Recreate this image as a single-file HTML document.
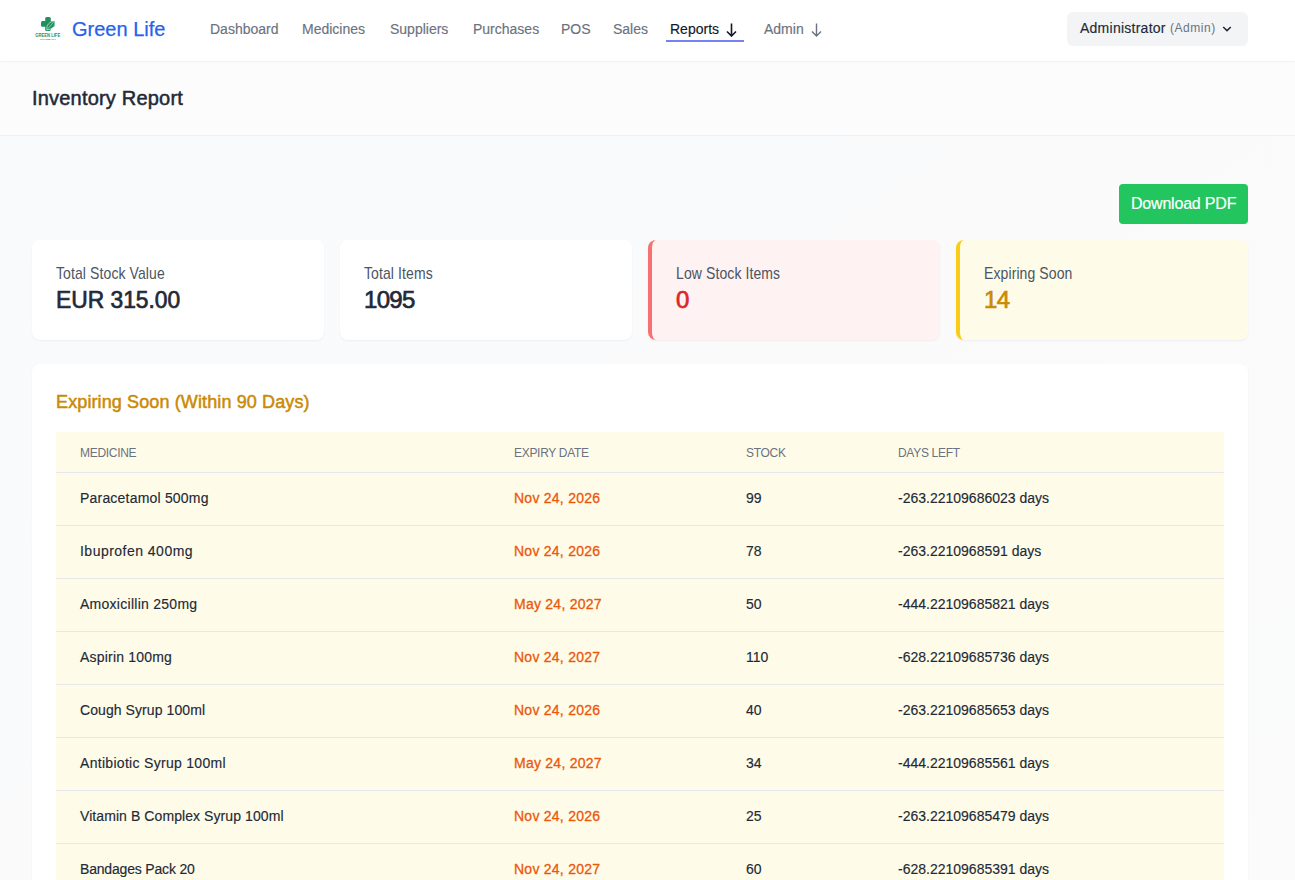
<!DOCTYPE html>
<html><head><meta charset="utf-8">
<style>
*{box-sizing:border-box;margin:0;padding:0}
html,body{width:1295px;height:880px;overflow:hidden}
body{font-family:"Liberation Sans",sans-serif;background:linear-gradient(to bottom right,#f9fafb,#fbfbfb);color:#111827;position:relative}
.t{position:absolute;white-space:nowrap}
.nav{position:absolute;left:0;top:0;width:1295px;height:62px;background:#fff;border-bottom:1px solid #f2f3f5;box-shadow:0 1px 2px rgba(0,0,0,0.02);z-index:2}
.logo{position:absolute;left:28px;top:10px;width:42px;height:36px}
.brand{left:72px;top:17px;font-size:20px;line-height:24px;color:#2563eb;-webkit-text-stroke:0.25px #2563eb}
.link{top:20px;font-size:14px;line-height:18px;color:#6b7280;-webkit-text-stroke:0.15px #6b7280}
.link.active{color:#111827;-webkit-text-stroke-color:#111827}
.arr{position:absolute;top:23px;width:11px;height:14px}
.uline{position:absolute;left:666px;top:40px;width:78px;height:2px;background:#7583f2}
.admin{position:absolute;left:1067px;top:12px;width:181px;height:34px;background:#f3f4f6;border-radius:6px}
.hdr{position:absolute;left:0;top:62px;width:1295px;height:74px;background:#fcfcfc;border-bottom:1px solid #f0f1f3}
.h1{left:32px;top:24px;font-size:20px;line-height:24px;color:#1f2937;-webkit-text-stroke:0.5px #1f2937;letter-spacing:0.2px}
.btn{position:absolute;left:1119px;top:184px;width:129px;height:40px;background:#22c55e;border-radius:4px}
.btn .t{left:12px;top:11px;font-size:16px;line-height:18px;color:#fff;letter-spacing:-0.2px;-webkit-text-stroke:0.2px #fff}
.card{position:absolute;top:240px;width:292px;height:100px;background:#fff;border-radius:8px;box-shadow:0 1px 2px rgba(0,0,0,0.05)}
.card .lbl{left:24px;top:25px;font-size:14px;line-height:18px;color:#4b5563;letter-spacing:0.1px;transform:scaleY(1.15);transform-origin:0 14px}
.card .val{left:24px;top:46px;font-size:24px;line-height:28px;color:#1f2937;-webkit-text-stroke:0.7px #1f2937;letter-spacing:-0.7px}
.card.red{background:#fef2f2;border-left:4px solid #f87171}
.card.yel{background:#fefce8;border-left:4px solid #facc15}
.panel{position:absolute;left:32px;top:364px;width:1216px;height:600px;background:#fff;border-radius:8px;box-shadow:0 1px 2px rgba(0,0,0,0.05)}
.h2{left:24px;top:27px;font-size:18px;line-height:22px;color:#ca8a04;-webkit-text-stroke:0.5px #ca8a04;letter-spacing:0.12px}
.tbl{position:absolute;left:24px;top:68px;width:1168px;background:#fefce8}
.th{position:relative;height:41px;border-bottom:1px solid #e5e7eb}
.th .t{top:14px;font-size:12px;line-height:14px;color:#6b7280;letter-spacing:-0.3px}
.tr{position:relative;height:53px;border-bottom:1px solid #e5e7eb}
.tr .t{top:17px;font-size:14px;line-height:17px;color:#1f2937;-webkit-text-stroke:0.15px #1f2937}
.tr .t.d{color:#ea580c;-webkit-text-stroke:0.3px #ea580c;letter-spacing:0.25px}
.c1{left:24px}.c2{left:458px}.c3{left:690px}.c4{left:842px}
</style></head><body>
<div class="nav">
  <svg class="logo" viewBox="0 0 42 36">
    <g fill="#1f9160">
      <rect x="17.2" y="7" width="5.6" height="14" rx="1.6"/>
      <rect x="13" y="11" width="14" height="5.8" rx="1.6"/>
      <path d="M19 19.8 C18 15.5 21 11.8 26.6 10.8 C27.6 15.5 25.5 19.3 19 19.8 Z" stroke="#fff" stroke-width="0.6"/>
    </g>
    <path d="M19.3 19.5 L25.6 12" stroke="#fff" stroke-width="0.45" fill="none"/>
    <text x="7.2" y="27" font-size="5.4" font-family="Liberation Sans" font-weight="bold" fill="#1f9160" textLength="25" lengthAdjust="spacingAndGlyphs">GREEN LIFE</text>
    <text x="12" y="29.6" font-size="2" font-family="Liberation Sans" font-weight="bold" fill="#1f9160" textLength="16" lengthAdjust="spacingAndGlyphs">PHARMACY</text>
  </svg>
  <div class="t brand">Green Life</div>
  <div class="t link" style="left:210px">Dashboard</div>
  <div class="t link" style="left:302px">Medicines</div>
  <div class="t link" style="left:390px">Suppliers</div>
  <div class="t link" style="left:473px">Purchases</div>
  <div class="t link" style="left:561px">POS</div>
  <div class="t link" style="left:613px">Sales</div>
  <div class="t link active" style="left:670px">Reports</div>
  <svg class="arr" style="left:726px" viewBox="0 0 11 14"><path d="M5.5 0.5 V13 M1 8.5 L5.5 13 L10 8.5" fill="none" stroke="#111827" stroke-width="1.6"/></svg>
  <div class="t link" style="left:764px">Admin</div>
  <svg class="arr" style="left:811px" viewBox="0 0 11 14"><path d="M5.5 0.5 V13 M1 8.5 L5.5 13 L10 8.5" fill="none" stroke="#6b7280" stroke-width="1.4"/></svg>
  <div class="uline"></div>
  <div class="admin">
    <div class="t" style="left:13px;top:7px;font-size:14px;line-height:18px;color:#1f2937;letter-spacing:0.25px;-webkit-text-stroke:0.15px #1f2937">Administrator</div>
    <div class="t" style="left:103px;top:8px;font-size:12px;line-height:16px;color:#6b7280;letter-spacing:0.55px">(Admin)</div>
    <svg style="position:absolute;left:155px;top:14px" width="10" height="6" viewBox="0 0 10 6"><path d="M1.2 1 L5 4.6 L8.8 1" fill="none" stroke="#1f2937" stroke-width="1.5"/></svg>
  </div>
</div>
<div class="hdr"><div class="t h1">Inventory Report</div></div>
<div class="btn"><div class="t">Download PDF</div></div>
<div class="card" style="left:32px"><div class="t lbl">Total Stock Value</div><div class="t val" style="letter-spacing:0;transform:scaleX(0.95);transform-origin:0 0">EUR 315.00</div></div>
<div class="card" style="left:340px"><div class="t lbl">Total Items</div><div class="t val">1095</div></div>
<div class="card red" style="left:648px"><div class="t lbl">Low Stock Items</div><div class="t val" style="color:#dc2626;-webkit-text-stroke-color:#dc2626">0</div></div>
<div class="card yel" style="left:956px"><div class="t lbl">Expiring Soon</div><div class="t val" style="color:#ca8a04;-webkit-text-stroke-color:#ca8a04">14</div></div>
<div class="panel">
  <div class="t h2">Expiring Soon (Within 90 Days)</div>
  <div class="tbl">
    <div class="th"><div class="t c1">MEDICINE</div><div class="t c2">EXPIRY DATE</div><div class="t c3">STOCK</div><div class="t c4">DAYS LEFT</div></div>
    <div class="tr"><div class="t c1" style="letter-spacing:0.2px">Paracetamol 500mg</div><div class="t c2 d">Nov 24, 2026</div><div class="t c3">99</div><div class="t c4">-263.22109686023 days</div></div>
    <div class="tr"><div class="t c1" style="letter-spacing:0.48px">Ibuprofen 400mg</div><div class="t c2 d">Nov 24, 2026</div><div class="t c3">78</div><div class="t c4">-263.2210968591 days</div></div>
    <div class="tr"><div class="t c1" style="letter-spacing:0.27px">Amoxicillin 250mg</div><div class="t c2 d">May 24, 2027</div><div class="t c3">50</div><div class="t c4">-444.22109685821 days</div></div>
    <div class="tr"><div class="t c1" style="letter-spacing:0.2px">Aspirin 100mg</div><div class="t c2 d">Nov 24, 2027</div><div class="t c3">110</div><div class="t c4">-628.22109685736 days</div></div>
    <div class="tr"><div class="t c1" style="letter-spacing:0.08px">Cough Syrup 100ml</div><div class="t c2 d">Nov 24, 2026</div><div class="t c3">40</div><div class="t c4">-263.22109685653 days</div></div>
    <div class="tr"><div class="t c1" style="letter-spacing:0.3px">Antibiotic Syrup 100ml</div><div class="t c2 d">May 24, 2027</div><div class="t c3">34</div><div class="t c4">-444.22109685561 days</div></div>
    <div class="tr"><div class="t c1" style="letter-spacing:0.08px">Vitamin B Complex Syrup 100ml</div><div class="t c2 d">Nov 24, 2026</div><div class="t c3">25</div><div class="t c4">-263.22109685479 days</div></div>
    <div class="tr"><div class="t c1" style="letter-spacing:-0.18px">Bandages Pack 20</div><div class="t c2 d">Nov 24, 2027</div><div class="t c3">60</div><div class="t c4">-628.22109685391 days</div></div>
  </div>
</div>
</body></html>
